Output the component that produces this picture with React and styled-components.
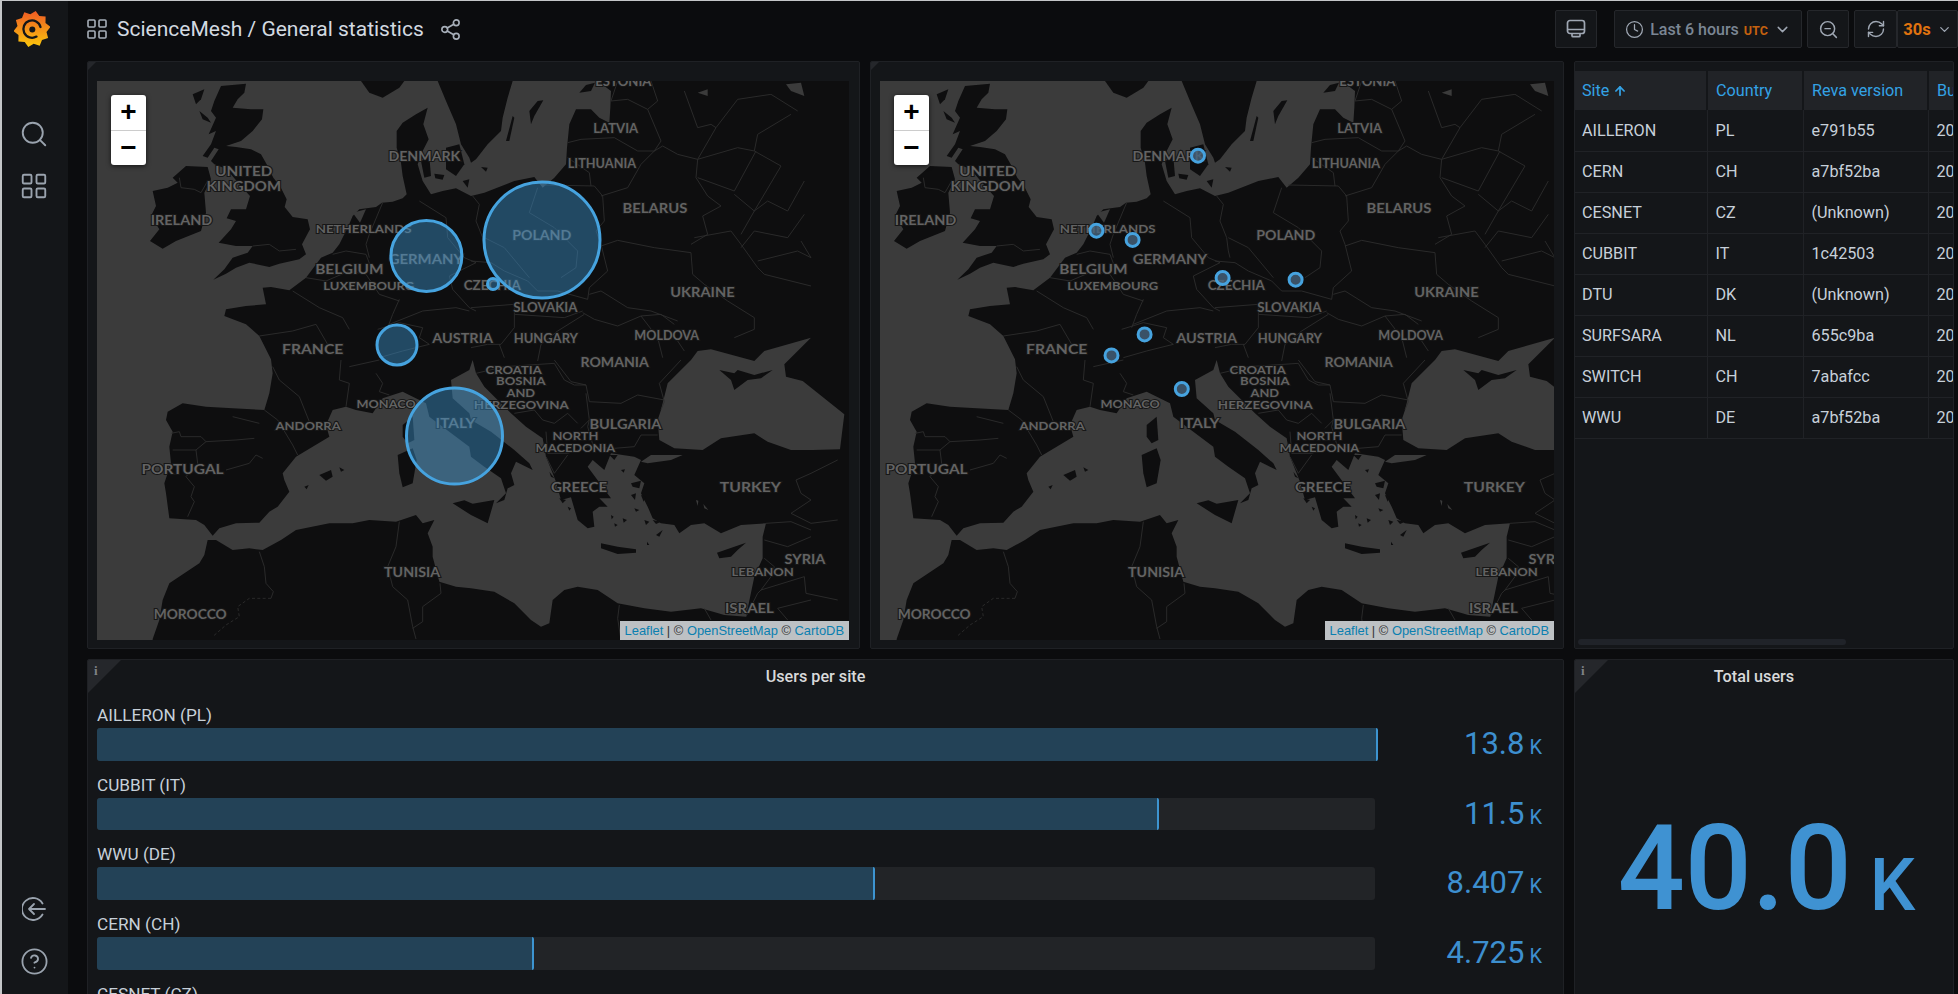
import React from "react";
import styled, { createGlobalStyle } from "styled-components";
import { Search, LayoutGrid, Share2, Clock, ChevronDown, ZoomOut, RefreshCw, ArrowUp, CircleHelp } from "lucide-react";

const GlobalStyle = createGlobalStyle`
  html, body { margin: 0; padding: 0; height: 100%; background: #0b0c0e; overflow: hidden; }
  * { box-sizing: border-box; }
  body { font-family: Roboto, "Liberation Sans", sans-serif; }
`;

const Page = styled.div`
  width: 1958px;
  height: 994px;
  display: flex;
  overflow: hidden;
  background: #0b0c0e;
  border-top: 1px solid #c4c6c8;
  border-left: 2px solid #c4c6c8;
`;

const SideMenu = styled.nav`
  width: 66px;
  flex: none;
  background: #141619;
  display: flex;
  flex-direction: column;
  align-items: center;
  color: #9aa3ae;
`;

const LogoSlot = styled.div`
  height: 118px;
  padding-top: 9px;
  margin-left: -7px;
`;

const SideIcon = styled.div`
  height: ${(p) => p.$h}px;
  display: flex;
  justify-content: center;
  margin-left: -2px;
`;

const Spacer = styled.div`
  flex: 1;
`;

const Main = styled.main`
  flex: 1;
  min-width: 0;
  display: flex;
  flex-direction: column;
`;

const Toolbar = styled.header`
  height: 60px;
  flex: none;
  display: flex;
  align-items: flex-start;
  padding: 9px 0 0 17px;
  color: #c7d0d9;
`;

const Crumb = styled.div`
  display: flex;
  align-items: center;
  height: 38px;
  gap: 8px;
  font-size: 21px;
  color: #d3dae1;
  svg { color: #a7afb9; }
`;

const ShareSlot = styled.span`
  display: flex;
  margin-left: 7px;
`;

const Tools = styled.div`
  margin-left: auto;
  display: flex;
  align-items: center;
  height: 38px;
`;

const ToolButton = styled.div`
  height: 38px;
  width: ${(p) => p.$w}px;
  margin-left: ${(p) => p.$ml || 0}px;
  background: #141619;
  border: 1px solid #25272b;
  border-radius: 2px;
  display: flex;
  align-items: center;
  justify-content: center;
  gap: 6px;
  color: #9fa7b3;
  font-size: 16px;
  font-weight: 500;
`;

const TimeText = styled.span`
  color: #7b8694;
  font-size: 16px;
  font-weight: 500;
  white-space: nowrap;
`;

const Utc = styled.span`
  color: #c4610f;
  font-size: 12.5px;
  font-weight: 700;
  margin-left: 5px;
`;

const Orange = styled.span`
  color: #e0730f;
  font-weight: 700;
  font-size: 16.5px;
`;

const Board = styled.div`
  padding-left: 19px;
  display: flex;
  flex-direction: column;
  gap: 10px;
`;

const Row = styled.div`
  display: flex;
  gap: 10px;
`;

const Panel = styled.section`
  position: relative;
  width: ${(p) => p.$w}px;
  height: ${(p) => p.$h}px;
  flex: none;
  background: #141619;
  border: 1px solid #1f2125;
  border-radius: 2px;
  overflow: hidden;
`;

const Corner = styled.div`
  position: absolute;
  left: 0;
  top: 0;
  width: ${(p) => p.$size}px;
  height: ${(p) => p.$size}px;
  background: #25272b;
  clip-path: polygon(0 0, 100% 0, 0 100%);
  color: #7f8388;
  font-family: "Liberation Serif", serif;
  font-weight: 700;
  font-size: 13px;
  padding: 3px 0 0 6px;
`;

const PanelTitle = styled.h2`
  margin: 0;
  height: 34px;
  line-height: 34px;
  padding-right: 20px;
  text-align: center;
  font-size: 16.2px;
  font-weight: 500;
  color: #d8d9da;
`;

const MapFrame = styled.div`
  position: relative;
  margin: 19px ${(p) => p.$right}px 0 9px;
  height: 559px;
  background: #3b3b3b;
  overflow: hidden;
  svg { display: block; }
`;

const ZoomBox = styled.div`
  position: absolute;
  left: 14px;
  top: 14px;
  width: 35px;
  height: 70px;
  background: #fff;
  border-radius: 3px;
  box-shadow: 0 1px 5px rgba(0, 0, 0, 0.65);
  display: flex;
  flex-direction: column;
  color: #000;
  font-family: "Liberation Sans", sans-serif;
  font-weight: 700;
  font-size: 28px;
`;

const ZoomKey = styled.div`
  flex: 1;
  display: flex;
  align-items: center;
  justify-content: center;
  line-height: 1;
  & + & { border-top: 1px solid #ccc; }
`;

const Attribution = styled.div`
  position: absolute;
  right: 0;
  bottom: 0;
  height: 19px;
  line-height: 19px;
  padding: 0 5px;
  background: #bdc1c4;
  color: #333;
  font-family: "Liberation Sans", sans-serif;
  font-size: 12.9px;
  white-space: nowrap;
`;

const AttrLink = styled.span`
  color: #0a7fb0;
`;

const TableWrap = styled.div`
  padding-top: 9px;
  margin-left: -1px;
`;

const Table = styled.table`
  width: 400px;
  table-layout: fixed;
  border-collapse: collapse;
  font-size: 16.2px;
  color: #c7d0d9;
`;

const Th = styled.th`
  width: ${(p) => p.$w}px;
  height: 39px;
  padding: 0 8px;
  background: #212327;
  color: #33a2e5;
  font-weight: 400;
  text-align: left;
  white-space: nowrap;
  overflow: hidden;
  border-right: 2px solid #141619;
  svg { vertical-align: -2px; margin-left: 4px; }
`;

const Td = styled.td`
  height: 41px;
  padding: 0 8px;
  border-bottom: 1px solid #202226;
  border-right: 1px solid #202226;
  white-space: nowrap;
  overflow: hidden;
`;

const ScrollThumb = styled.div`
  position: absolute;
  left: 3px;
  bottom: 3px;
  width: 268px;
  height: 6px;
  border-radius: 3px;
  background: #202329;
`;

const BarList = styled.div`
  padding: 9px 0 0 9px;
  display: flex;
  flex-direction: column;
  gap: 12px;
`;

const BarRow = styled.div`
  display: grid;
  grid-template-columns: 1278px 1fr;
  grid-template-rows: 25px 32.67px;
`;

const BarLabel = styled.div`
  grid-column: 1 / 3;
  font-size: 17.2px;
  line-height: 24px;
  color: #c7d0d9;
`;

const BarTrack = styled.div`
  background: #222427;
  border-radius: 3px;
  position: relative;
`;

const BarFill = styled.div`
  position: absolute;
  left: 0;
  top: 0;
  bottom: 0;
  background: #234257;
  border-right: 2px solid #3d94d0;
  border-radius: 3px 2px 2px 3px;
`;

const BarValue = styled.div`
  display: flex;
  justify-content: flex-end;
  align-items: baseline;
  padding-right: 21px;
  color: #3d8fcf;
  font-size: 31px;
  line-height: 31px;
  gap: 5px;
`;

const ValueUnit = styled.span`
  font-size: 20px;
`;

const StatBody = styled.div`
  height: 350px;
  display: flex;
  align-items: center;
  justify-content: center;
  padding-left: 5px;
  gap: 18px;
  color: #3f92d2;
  font-weight: 500;
  font-size: 118px;
  line-height: 1;
`;

const StatUnit = styled.span`
  font-size: 72px;
  align-self: center;
  margin-top: 34px;
`;

// coastlines are traced from four 3x crops of the map, one list per crop
const ORIGIN = { nw: [0, 0], ne: [1005, 0], sw: [0, 837], se: [1005, 837], abs: [0, 0] };

const place = (quad, pts) => {
  const [ox, oy] = ORIGIN[quad];
  return pts
    .trim()
    .split(/\s+/)
    .map((p) => {
      const [x, y] = p.split(",").map(Number);
      return `${x + ox},${y + oy}`;
    })
    .join(" ");
};

const closed = (...parts) => `M${parts.map(([q, pts]) => place(q, pts)).join(" ")}Z`;

const LAND = closed(
  ["ne", "380,0 420,30 418,80 415,125 385,110 360,85 315,85 295,130 288,200 285,250 250,290 215,320 190,288 130,300 40,335 0,345"],
  ["nw", "960,322 920,330 885,340 860,300 845,250 860,210 878,175 862,130 875,80 840,100 800,125 782,150 782,200 795,245 800,285 812,340 800,352 770,362 738,365 720,378 670,385 650,405 635,440 610,490 590,515 555,530 510,590 460,628 405,618 380,620 390,670 330,675 270,685 265,705 330,730 370,765 405,835"],
  ["sw", "410,40 400,100 385,150 290,145 210,140 140,130 95,155 90,180 110,215 100,260 105,310 85,370 90,400 100,475 180,480 205,495 230,527 250,505 300,490 370,488 400,455 425,440 460,395 445,360 440,340 480,290 580,230 570,195 590,150 630,140 660,150 710,160 740,115 800,95 870,130 880,170 920,200 1000,260"],
  ["se", "0,290 40,320 90,355 105,400 75,430 100,420 110,385 130,375 120,340 135,305 185,330 175,310 130,270 85,235 60,215 0,180"],
  ["sw", "1000,160 950,115 945,60 1000,30 1010,0"],
  ["se", "15,40 40,80 80,120 120,160 165,200 215,235 225,290 245,340 255,365 270,420 300,412 320,480 350,505 370,500 365,455 385,440 410,440 385,415 420,415 350,320 365,300 400,330 420,280 490,290 510,300 490,345 520,370 510,400 530,440 545,475 570,490 610,495 625,520 660,495 700,490 750,520 810,495 885,490 875,530 875,595 850,650 825,770 760,765 690,745 600,755 520,745 440,730 380,690 320,680 280,690 245,720 235,790 210,800 180,780 130,730 70,695 0,685"],
  ["sw", "960,680 910,665 890,590 890,560 875,520 895,480 860,490 840,465 780,485 700,480 650,490 580,490 480,510 435,540 380,570 340,565 290,570 240,540 215,540 205,585 190,610 100,670 80,720 70,780 50,837"],
  ["abs", "50,1690 2300,1690 2300,0"]
);

const ISLANDS = [
  closed(["nw", "255,15 330,8 325,35 305,55 290,80 345,85 382,85 378,115 350,150 315,180 270,195 300,198 345,205 375,220 392,250 412,290 432,315 452,355 446,378 470,408 515,415 522,445 498,490 510,520 490,535 430,548 400,558 340,545 300,560 270,578 232,596 265,565 290,530 335,515 350,495 300,495 248,485 285,445 300,420 272,412 285,385 330,385 342,345 310,310 285,280 262,260 235,250 225,240 248,205 235,200 215,230 200,225 225,190 240,150 218,160 240,110 225,90 235,60"]),
  closed(["nw", "110,290 150,255 215,258 225,295 205,335 210,395 195,450 120,480 80,503 42,480 70,445 45,405 60,375 50,330 95,320 125,305"]),
  closed(["nw", "170,40 205,25 195,55 180,70"]),
  closed(["nw", "190,90 215,110 225,125 200,115"]),
  closed(["nw", "675,0 700,35 740,50 790,20 805,0"]),
  closed(["nw", "905,0 930,60 960,130 975,190 1000,230 1005,245"], ["ne", "15,235 50,190 90,150 95,110 110,50 125,0"]),
  closed(["nw", "930,200 970,190 985,250 960,285 930,265"]),
  closed(["nw", "855,240 880,228 885,285 865,290"]),
  closed(["nw", "895,278 925,282 920,296 898,292"]),
  closed(["nw", "980,300 1000,295 995,320"]),
  closed(["ne", "175,90 200,60 217,58 190,105 180,130"]),
  closed(["ne", "105,180 125,105 130,110 115,180"]),
  closed(["ne", "325,35 345,12 372,5 360,30"]),
  closed(["ne", "30,258 50,260 45,272"]),
  closed(["sw", "800,195 830,170 835,240 815,250 800,230"]),
  closed(["sw", "785,285 830,265 842,300 830,370 800,382 790,340"]),
  closed(["sw", "550,345 585,330 590,350 570,362"]),
  closed(["sw", "610,322 625,330 615,335"]),
  closed(["sw", "505,380 518,375 512,388"]),
  closed(["sw", "950,430 985,421 1010,431"], ["se", "70,420 50,490 0,465"]),
  closed(["se", "390,550 440,560 495,568 495,578 440,582 390,565"]),
  closed(["se", "738,578 790,560 825,548 800,570 780,590 745,595"]),
  closed(["se", "745,30 790,40 800,30 850,45 905,30 870,55 830,60 790,90 780,60"]),
  closed(["se", "450,330 462,328 458,338"]),
  closed(["se", "480,370 510,362 505,385 485,380"]),
  closed(["se", "480,405 495,400 492,420"]),
  closed(["se", "510,405 525,410 518,425"]),
  closed(["se", "490,445 505,450 495,455"]),
  closed(["se", "420,465 428,470 422,478"]),
  closed(["se", "430,490 440,495 432,500"]),
  closed(["se", "455,475 468,480 458,488"]),
  closed(["se", "520,480 535,485 525,495"]),
  closed(["se", "555,525 575,510 565,530"]),
  closed(["se", "528,545 535,555 528,555"]),
  closed(["se", "545,480 570,485 555,492"]),
  closed(["se", "415,285 440,285 430,300"]),
  closed(["se", "235,335 250,355 240,350"]),
  closed(["se", "265,415 285,420 275,430"]),
  closed(["se", "290,440 300,445 295,452"]),
];

const INLAND_WATER = [
  closed(["abs", "1665,837 1595,907 1575,987 1565,1017 1570,1077 1615,1102 1700,1107 1755,1072 1855,1057 1895,1082 1965,1107 2030,1107 2112,1105 2125,1000 2000,900 1950,887 1945,850 2025,770 1885,810 1855,840 1725,805 1685,810"]),
  closed(["se", "510,305 540,285 635,285 600,300 530,310"]),
  closed(["se", "697,432 712,450 700,445"]),
  closed(["se", "675,420 682,422 680,438"]),
  closed(["ne", "15,30 40,0 45,5 20,65"]),
  closed(["ne", "680,35 710,25 710,45"]),
  closed(["ne", "945,10 990,5 1000,45 960,30"]),
  closed(["nw", "650,395 690,385 672,425"]),
];

const BORDERS = {
  nw: [
    "130,290 135,320 175,325 195,335 215,300",
    "350,495 400,490 430,510 480,505",
    "740,365 700,460 690,490 700,530",
    "590,520 630,510 690,520 705,560",
    "510,590 570,600 640,570 690,580 730,640 790,660",
    "790,655 770,700 755,740",
    "470,630 550,680 620,710 640,745",
    "370,765 470,750 540,730 575,790",
    "850,360 930,410 935,470 985,530 1020,545",
    "1020,545 940,585 950,625 1000,680 1020,690",
    "760,730 860,690 960,680 1000,690",
    "725,745 790,725 860,740 850,770 880,790 800,810 730,830",
  ],
  ne: [
    "5,345 25,370 15,420 35,470 40,510 45,530",
    "0,540 60,545 100,570 170,600 200,630",
    "40,470 100,500 175,590",
    "200,630 260,630 350,655 355,620 410,570 390,490 375,450 400,420 395,345 370,315 220,312",
    "200,320 175,395 250,440 320,510 315,560 270,590",
    "360,315 355,275 290,230",
    "290,185 330,175 430,170 500,210 550,210 510,250 470,320 390,345",
    "420,60 470,55 530,85 570,180 550,210 575,195 620,220 680,235",
    "390,495 440,478 550,500 660,515",
    "680,235 675,290 710,345 750,375 695,405 710,460 660,490",
    "660,515 665,580 700,610",
    "670,470 780,450 810,490 860,560 880,580 1020,615",
    "335,690 280,710 130,700 130,670 0,680",
    "355,640 390,630 470,680 540,690 620,720",
    "335,695 370,715 440,735 510,705 570,700 610,730",
    "510,705 560,770 575,830",
    "620,780 640,810",
    "700,610 770,660 850,710 850,745 790,770",
    "130,700 130,740 90,790 50,790 0,800",
    "340,700 260,750 210,790 200,840",
    "85,790 100,830",
    "680,235 735,140 720,130 680,140 640,30",
    "735,140 800,55 900,40 980,90",
    "680,235 800,200 850,210 860,160 960,100",
    "855,210 790,330 680,290",
    "790,340 850,390 930,255 850,210",
    "850,390 810,460",
    "850,390 890,360 950,390 1000,300",
    "810,500 850,450 950,470 1000,400",
    "860,540 980,510 1020,530 990,480",
    "420,60 440,0",
    "530,85 560,60 540,0",
  ],
  sw: [
    "385,150 425,180 470,255 485,285",
    "290,170 370,190",
    "105,220 130,215 135,230 195,230 210,245 180,270 110,270",
    "180,270 185,310 150,350 175,380 165,410 175,425 155,470",
    "210,245 300,240 355,235",
    "270,330 340,310 360,285 380,295",
    "410,20 430,60 490,110 520,185",
    "615,0 610,60 640,70 630,140",
    "640,20 730,0",
    "720,40 740,70 730,95 760,105",
    "370,575 385,620 390,670 412,695 405,715",
    "790,485 780,560 755,620 770,680 815,720 830,800 840,837",
    "912,670 915,700 860,740 860,785 830,805",
  ],
  se: [
    "15,40 100,20 250,10 280,60 310,75 345,75",
    "345,75 355,125 450,130 500,105 580,120",
    "345,100 355,180 330,205",
    "130,160 190,150 215,180 250,190 290,160 320,190",
    "225,215 230,280 290,280 350,260 430,265 490,260 510,225 560,225",
    "355,180 350,200 370,270",
    "225,290 250,340 290,285",
    "250,0 300,65 345,75",
    "630,0 565,70 580,125 570,150",
    "1020,340 975,360 990,400 1020,420 960,460 1020,490",
    "885,490 960,485 1020,510",
    "880,540 950,560 1020,530",
    "880,595 910,620 900,650 870,690 1000,650 1005,700 1100,720",
    "825,770 860,700 870,690",
    "920,745 1020,720",
    "920,745 950,780",
    "445,735 440,775 450,840",
    "700,745 720,780",
    "1020,340 1100,300",
    "1020,490 1100,480",
  ],
};

const DASHED = place("sw", "405,715 340,715 305,740 310,770 270,795 230,830");

const BORDER_PATHS = Object.entries(BORDERS).flatMap(([quad, lines]) =>
  lines.map((line) => `M${place(quad, line)}`)
);

const LABELS = [
  ["ESTONIA", 1065, 55, 110, 13],
  ["UNITED", 321, 291, 112, 13.5],
  ["KINGDOM", 321, 329, 146, 13.5],
  ["IRELAND", 199, 417, 121, 13],
  ["DENMARK", 675, 250, 141, 13],
  ["LATVIA", 1050, 178, 88, 12.5],
  ["LITHUANIA", 1023, 271, 134, 12.5],
  ["BELARUS", 1127, 387, 127, 13],
  ["POLAND", 905, 457, 116, 13.5],
  ["NETHERLANDS", 556, 440, 188, 12],
  ["GERMANY", 678, 520, 146, 13.5],
  ["BELGIUM", 528, 545, 134, 13.5],
  ["LUXEMBOURG", 566, 588, 178, 12],
  ["CZECHIA", 808, 588, 112, 12.5],
  ["UKRAINE", 1220, 605, 126, 13.5],
  ["SLOVAKIA", 912, 646, 126, 12.5],
  ["AUSTRIA", 750, 726, 119, 13.5],
  ["HUNGARY", 913, 727, 126, 12.5],
  ["MOLDOVA", 1150, 721, 127, 12.5],
  ["FRANCE", 456, 756, 120, 13.5],
  ["ROMANIA", 1048, 788, 134, 13],
  ["CROATIA", 850, 808, 110, 12],
  ["BOSNIA", 864, 838, 97, 12],
  ["AND", 864, 869, 56, 12],
  ["HERZEGOVINA", 865, 900, 186, 12],
  ["MONACO", 600, 897, 116, 12],
  ["ANDORRA", 447, 954, 128, 12],
  ["BULGARIA", 1069, 951, 141, 13],
  ["ITALY", 736, 948, 78, 13.5],
  ["NORTH", 971, 982, 90, 12],
  ["MACEDONIA", 971, 1012, 156, 12],
  ["PORTUGAL", 201, 1070, 161, 13.5],
  ["GREECE", 978, 1117, 110, 13],
  ["TURKEY", 1314, 1117, 120, 13.5],
  ["SYRIA", 1421, 1305, 80, 12.5],
  ["TUNISIA", 651, 1338, 110, 12.5],
  ["LEBANON", 1338, 1337, 122, 12],
  ["ISRAEL", 1312, 1433, 96, 12.5],
  ["MOROCCO", 216, 1448, 143, 12.5],
];

const toX = (zx) => 80 + zx / 1.96;
const toY = (zy) => 60 + zy / 2.613;

const MapLabel = styled.text`
  font-family: Lato, "Open Sans", sans-serif;
  font-weight: 700;
  fill: #636363;
  stroke: #171717;
  stroke-width: 2px;
  paint-order: stroke;
  text-anchor: middle;
  dominant-baseline: central;
`;

const EuropeMap = ({ viewBox, width, markers, markerFill }) => (
  <svg width={width} height={559} viewBox={viewBox}>
    <g transform="translate(136 81) scale(0.33333)">
      <path d={LAND} fill="#0e0e0f" />
      {INLAND_WATER.map((d) => (
        <path key={d} d={d} fill="#3b3b3b" />
      ))}
      {ISLANDS.map((d) => (
        <path key={d} d={d} fill="#0e0e0f" />
      ))}
      {BORDER_PATHS.map((d) => (
        <path key={d} d={d} fill="none" stroke="#2e2e2e" strokeWidth="2.6" strokeLinejoin="round" />
      ))}
      <path d={`M${DASHED}`} fill="none" stroke="#2e2e2e" strokeWidth="2.6" strokeDasharray="9 7" />
    </g>
    {LABELS.map(([text, x, y, w, size]) => (
      <MapLabel key={text} x={toX(x)} y={toY(y)} fontSize={size} textLength={w / 1.96} lengthAdjust="spacingAndGlyphs">
        {text}
      </MapLabel>
    ))}
    {markers.map(([x, y, r]) => (
      <circle key={`${x}-${y}`} cx={x} cy={y} r={r} fill={markerFill} stroke="#46a3df" strokeWidth="3" />
    ))}
  </svg>
);

const MapPanelBody = ({ right, ...rest }) => (
  <MapFrame $right={right}>
    <EuropeMap {...rest} />
    <ZoomBox>
      <ZoomKey>+</ZoomKey>
      <ZoomKey>−</ZoomKey>
    </ZoomBox>
    <Attribution>
      <AttrLink>Leaflet</AttrLink> | © <AttrLink>OpenStreetMap</AttrLink> © <AttrLink>CartoDB</AttrLink>
    </Attribution>
  </MapFrame>
);

const GrafanaLogo = () => {
  const teeth = 10;
  const pts = [];
  for (let i = 0; i < teeth * 2; i++) {
    const a = (i / (teeth * 2)) * Math.PI * 2 - Math.PI / 2 + 0.2;
    const r = i % 2 ? 14.8 : 18.5;
    pts.push(`${(18 + r * Math.cos(a)).toFixed(1)},${(19 + r * Math.sin(a)).toFixed(1)}`);
  }
  return (
    <svg width="36" height="38" viewBox="0 0 36 38">
      <defs>
        <linearGradient id="gf" x1="0" y1="0" x2="0" y2="1">
          <stop offset="0" stopColor="#ee5a24" />
          <stop offset="1" stopColor="#fbc80c" />
        </linearGradient>
      </defs>
      <polygon points={pts.join(" ")} fill="url(#gf)" />
      <path d="M26.5 17A8.7 8.7 0 1 0 22.5 26.6" fill="none" stroke="#141619" strokeWidth="2.3" strokeLinecap="round" />
      <circle cx="18.3" cy="19.4" r="3" fill="#141619" />
    </svg>
  );
};

const SignOutIcon = () => (
  <svg width="24" height="24" viewBox="0 0 24 24" fill="none" stroke="currentColor" strokeWidth="1.8" strokeLinecap="round" strokeLinejoin="round">
    <path d="M20.5 6.5A11 11 0 1 0 20.5 17.5" />
    <path d="M23 12H7M12 7l-5 5 5 5" />
  </svg>
);

const TvIcon = () => (
  <svg width="20" height="20" viewBox="0 0 20 20" fill="none" stroke="currentColor" strokeWidth="1.7" strokeLinejoin="round">
    <rect x="1.5" y="1.5" width="17" height="13" rx="2.5" />
    <path d="M1.5 10.5h17M6 14.5v2.2a1 1 0 0 0 1 1h6a1 1 0 0 0 1-1v-2.2" />
  </svg>
);

const MAP1_MARKERS = [
  [542, 240, 58],
  [426.4, 256, 35.5],
  [493, 284, 5.5],
  [397, 345, 20],
  [454.5, 436, 48],
];

const MAP2_MARKERS = [
  [1198, 155.7],
  [1096.4, 230.7],
  [1132.6, 239.9],
  [1222.6, 278],
  [1295.6, 279.7],
  [1144.6, 334.4],
  [1111.5, 355.4],
  [1181.8, 389],
].map(([x, y]) => [x - 744, y, 6.5]);

const SITES = [
  ["AILLERON", "PL", "e791b55"],
  ["CERN", "CH", "a7bf52ba"],
  ["CESNET", "CZ", "(Unknown)"],
  ["CUBBIT", "IT", "1c42503"],
  ["DTU", "DK", "(Unknown)"],
  ["SURFSARA", "NL", "655c9ba"],
  ["SWITCH", "CH", "7abafcc"],
  ["WWU", "DE", "a7bf52ba"],
];

const BARS = [
  { label: "AILLERON (PL)", value: "13.8", width: 1281 },
  { label: "CUBBIT (IT)", value: "11.5", width: 1062 },
  { label: "WWU (DE)", value: "8.407", width: 778 },
  { label: "CERN (CH)", value: "4.725", width: 437 },
  { label: "CESNET (CZ)", width: 90 },
];

const App = () => (
  <Page>
    <GlobalStyle />
    <SideMenu>
      <LogoSlot>
        <GrafanaLogo />
      </LogoSlot>
      <SideIcon $h={52}>
        <Search size={30} strokeWidth={1.5} />
      </SideIcon>
      <SideIcon $h={52}>
        <LayoutGrid size={30} strokeWidth={1.5} />
      </SideIcon>
      <Spacer />
      <SideIcon $h={50}>
        <SignOutIcon />
      </SideIcon>
      <SideIcon $h={47}>
        <CircleHelp size={29} strokeWidth={1.5} />
      </SideIcon>
    </SideMenu>
    <Main>
      <Toolbar>
        <Crumb>
          <LayoutGrid size={24} strokeWidth={1.6} />
          ScienceMesh / General statistics
          <ShareSlot>
            <Share2 size={23} strokeWidth={1.7} />
          </ShareSlot>
        </Crumb>
        <Tools>
          <ToolButton $w={42}>
            <TvIcon />
          </ToolButton>
          <ToolButton $w={188} $ml={17}>
            <Clock size={19} strokeWidth={1.6} />
            <TimeText>
              Last 6 hours<Utc>UTC</Utc>
            </TimeText>
            <ChevronDown size={17} />
          </ToolButton>
          <ToolButton $w={42} $ml={5}>
            <ZoomOut size={21} strokeWidth={1.7} />
          </ToolButton>
          <ToolButton $w={43} $ml={5}>
            <RefreshCw size={20} strokeWidth={1.7} />
          </ToolButton>
          <ToolButton $w={61}>
            <Orange>30s</Orange>
            <ChevronDown size={15} />
          </ToolButton>
        </Tools>
      </Toolbar>
      <Board>
        <Row>
          <Panel $w={773} $h={588}>
            <Corner $size={8} />
            <MapPanelBody right={10} width={752} viewBox="97 81 752 559" markers={MAP1_MARKERS} markerFill="rgba(61,154,216,0.42)" />
          </Panel>
          <Panel $w={694} $h={588}>
            <Corner $size={8} />
            <MapPanelBody right={9} width={674} viewBox="136 81 674 559" markers={MAP2_MARKERS} markerFill="rgba(70,100,125,0.8)" />
          </Panel>
          <Panel $w={380} $h={588}>
            <TableWrap>
              <Table>
                <thead>
                  <tr>
                    <Th $w={133}>
                      Site
                      <ArrowUp size={14} strokeWidth={3} />
                    </Th>
                    <Th $w={96}>Country</Th>
                    <Th $w={125}>Reva version</Th>
                    <Th $w={46}>Build date</Th>
                  </tr>
                </thead>
                <tbody>
                  {SITES.map(([site, country, version]) => (
                    <tr key={site}>
                      <Td>{site}</Td>
                      <Td>{country}</Td>
                      <Td>{version}</Td>
                      <Td>20</Td>
                    </tr>
                  ))}
                </tbody>
              </Table>
            </TableWrap>
            <ScrollThumb />
          </Panel>
        </Row>
        <Row>
          <Panel $w={1477} $h={385}>
            <Corner $size={33}>i</Corner>
            <PanelTitle>Users per site</PanelTitle>
            <BarList>
              {BARS.map((bar) => (
                <BarRow key={bar.label}>
                  <BarLabel>{bar.label}</BarLabel>
                  <BarTrack>
                    <BarFill style={{ width: bar.width }} />
                  </BarTrack>
                  {bar.value && (
                    <BarValue>
                      {bar.value}
                      <ValueUnit>K</ValueUnit>
                    </BarValue>
                  )}
                </BarRow>
              ))}
            </BarList>
          </Panel>
          <Panel $w={380} $h={385}>
            <Corner $size={33}>i</Corner>
            <PanelTitle>Total users</PanelTitle>
            <StatBody>
              40.0
              <StatUnit>K</StatUnit>
            </StatBody>
          </Panel>
        </Row>
      </Board>
    </Main>
  </Page>
);

export default App;
